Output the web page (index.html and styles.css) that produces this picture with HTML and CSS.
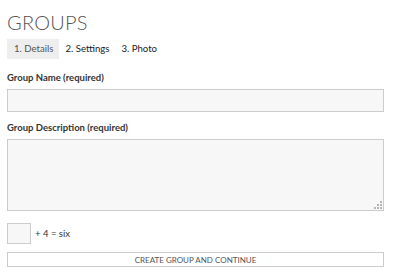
FILE: index.html
```html
<!DOCTYPE html>
<html lang="en">
<head>
  <meta charset="UTF-8" />
  <title>Groups - Create</title>
  <link rel="stylesheet" href="styles.css">
</head>
<body>
  <div class="page">
    <h1 class="page-title">GROUPS</h1>

    <!-- Step tabs -->
    <ul class="steps">
      <li class="step current">1. Details</li>
      <li class="step">2. Settings</li>
      <li class="step">3. Photo</li>
    </ul>

    <form class="group-form">
      <label for="group-name">Group Name (required)</label>
      <input type="text" id="group-name" name="group-name" />

      <label for="group-desc">Group Description (required)</label>
      <div class="textarea-wrap">
        <textarea id="group-desc" name="group-desc"></textarea>
        <!-- resize grip -->
        <svg class="grip" viewBox="0 0 8 8" aria-hidden="true">
          <rect x="6" y="0" width="2" height="2" />
          <rect x="3" y="3" width="2" height="2" />
          <rect x="6" y="3" width="2" height="2" />
          <rect x="0" y="6" width="2" height="2" />
          <rect x="3" y="6" width="2" height="2" />
          <rect x="6" y="6" width="2" height="2" />
        </svg>
      </div>

      <div class="captcha">
        <input type="text" class="captcha-input" aria-label="Answer" />
        <span>+ 4 = six</span>
      </div>

      <button type="submit">CREATE GROUP AND CONTINUE</button>
    </form>
  </div>
</body>
</html>
```

FILE: styles.css
```css
* {
  box-sizing: border-box;
  font-family: 'Lato', 'Liberation Sans', sans-serif;
}

body {
  margin: 0;
  background: #fff;
  color: #333;
}

.page {
  padding: 10px 12px 0 7px;
}

/* Title */
.page-title {
  margin: 0;
  font-size: 20px;
  font-weight: 300;
  line-height: 24px;
  color: #555;
  letter-spacing: 0.01em;
}

/* Steps */
.steps {
  list-style: none;
  margin: 5px 0 0;
  padding: 0;
  display: flex;
}

.step {
  height: 20px;
  line-height: 20px;
  padding: 0 6px;
  font-size: 9.6px;
  color: #222;
}

.step.current {
  background: #eee;
  color: #555;
  padding: 0 6px 0 7px;
}

/* Form */
.group-form {
  display: flex;
  flex-direction: column;
  margin-top: 12px;
}

label {
  font-size: 9.5px;
  font-weight: 700;
  line-height: 14px;
  color: #333;
  margin-bottom: 4px;
}

input[type="text"],
textarea {
  width: 100%;
  border: 1px solid #ccc;
  background: #f7f7f7;
  font-size: 10px;
  padding: 3px 5px;
}

#group-name {
  height: 23px;
  margin-bottom: 9px;
}

.textarea-wrap {
  position: relative;
  height: 72px;
}

textarea {
  display: block;
  height: 72px;
  resize: none;
}

.grip {
  position: absolute;
  right: 2px;
  bottom: 2px;
  width: 8px;
  height: 8px;
  fill: #b5b5b5;
}

.captcha {
  display: flex;
  align-items: center;
  gap: 4px;
  margin-top: 12px;
  font-size: 9.5px;
  color: #333;
}

.captcha .captcha-input {
  width: 24px;
  height: 21px;
}

button {
  margin-top: 8px;
  height: 15px;
  padding: 0;
  border: 1px solid #ccc;
  background: #fff;
  color: #555;
  font-size: 8px;
  cursor: pointer;
}
```
